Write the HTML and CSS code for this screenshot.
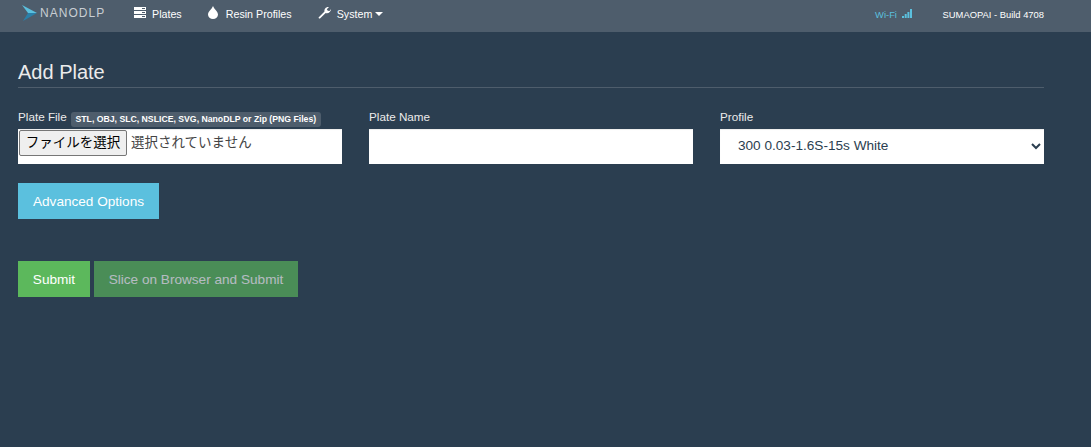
FILE: index.html
```html
<!DOCTYPE html>
<html lang="ja">
<head>
<meta charset="utf-8">
<title>NanoDLP</title>
<link rel="stylesheet" href="styles.css">
</head>
<body>
<nav class="navbar">
  <a class="brand">
    <svg class="brand-mark" width="15" height="16" viewBox="0 0 15 16"><path d="M0 0 L15 8 L6 8 Z" fill="#5bc0de"/><path d="M6 8 L15 8 L1 16 Z" fill="#2a7fa8"/></svg>
    <span class="brand-text">NANODLP</span>
  </a>
  <a class="nav-link">
    <svg class="icon icon-plates" width="12" height="11" viewBox="0 0 12 11"><path d="M0 0h12v3H0zM0 4h12v3H0zM0 8h12v3H0z" fill="#fff"/><path d="M8 1.500h3M8 5.500h3M8 9.500h3" stroke="#4e5d6c"/></svg>
    <span>Plates</span>
  </a>
  <a class="nav-link">
    <svg class="icon icon-drop" width="10" height="13" viewBox="0 0 10 13"><path d="M5 0C6 3 10 5.500 10 8.500A5 4.500 0 0 1 0 8.500C0 5.500 4 3 5 0Z" fill="#fff"/></svg>
    <span>Resin Profiles</span>
  </a>
  <a class="nav-link">
    <svg class="icon icon-wrench" width="13" height="13" viewBox="0 0 13 13"><path d="M1 12.500L0.500 11.500L6.500 5.500C6 3 8 0.500 11 1L8.800 3.200L9.800 4.700L11.500 5L13 3C13 6 10 8 7.700 7L2 12.500Z" fill="#fff"/></svg>
    <span>System</span>
    <span class="caret"></span>
  </a>
  <div class="nav-right">
    <span class="wifi">Wi-Fi
      <svg class="wifi-bars" width="10" height="9" viewBox="0 0 10 9"><path d="M0 7h2v2H0zM2.700 5h2v4h-2zM5.400 3h2v6h-2zM8 0h2v9H8z" fill="#5bc0de"/></svg>
    </span>
    <span class="build">SUMAOPAI - Build 4708</span>
  </div>
</nav>
<main class="page">
  <h1 class="title">Add Plate</h1>
  <form class="plate-form">
    <div class="fields">
      <div class="field">
        <label class="field-label">Plate File <span class="badge">STL, OBJ, SLC, NSLICE, SVG, NanoDLP or Zip (PNG Files)</span></label>
        <div class="file-input">
          <button type="button" class="file-button">ファイルを選択</button>
          <span class="file-name">選択されていません</span>
        </div>
      </div>
      <div class="field">
        <label class="field-label">Plate Name</label>
        <input class="text-input" type="text">
      </div>
      <div class="field">
        <label class="field-label">Profile</label>
        <select class="select-input"><option>300 0.03-1.6S-15s White</option></select>
      </div>
    </div>
    <button type="button" class="btn btn-info">Advanced Options</button>
    <div class="actions">
      <button type="button" class="btn btn-success">Submit</button>
      <button type="button" class="btn btn-success btn-disabled">Slice on Browser and Submit</button>
    </div>
  </form>
</main>
</body>
</html>
```
FILE: styles.css
```css
* { box-sizing: border-box; }
html, body { height: 100%; }
body {
  margin: 0;
  background: #2b3e50;
  color: #ebebeb;
  font-family: "Liberation Sans", Arial, sans-serif;
  font-size: 12px;
  overflow: hidden;
}
.navbar {
  display: flex;
  align-items: center;
  height: 32px;
  padding: 0 47px 0 22px;
  background: #4e5d6c;
  color: #fff;
  font-size: 10.7px;
}
.brand {
  display: flex;
  align-items: center;
  width: 112px;
  height: 20px;
  margin-top: -6px;
}
.brand-mark { margin-right: 3px; }
.brand-text {
  color: #c8ced3;
  font-size: 12px;
  letter-spacing: 1.05px;
}
.nav-link {
  display: flex;
  align-items: center;
  margin-right: 26px;
  margin-top: -4px;
  white-space: nowrap;
}
.icon { margin-top: -3px; }
.icon-plates { margin-right: 6px; }
.icon-drop { margin-right: 8px; }
.icon-wrench { margin-right: 6px; }
.caret {
  display: inline-block;
  width: 0;
  height: 0;
  margin-left: 3px;
  border-left: 4px solid transparent;
  border-right: 4px solid transparent;
  border-top: 4px solid #fff;
}
.nav-right {
  display: flex;
  align-items: center;
  margin-left: auto;
  margin-top: -4px;
  font-size: 9.4px;
}
.wifi { color: #5bc0de; margin-right: 31px; }
.wifi-bars { margin-left: 2px; }
.build { color: #fff; }
.page { padding: 29px 47px 0 18px; }
.title {
  margin: 0;
  padding-bottom: 4px;
  border-bottom: 1px solid #4e5d6c;
  color: #ebebeb;
  font-size: 20px;
  font-weight: 400;
  line-height: 22px;
  height: 27px;
}
.fields {
  display: grid;
  grid-template-columns: repeat(3, 324px);
  column-gap: 27px;
  margin-top: 21px;
}
.field { display: flex; flex-direction: column; }
.field-label {
  display: block;
  height: 20px;
  line-height: 16px;
  font-size: 11.7px;
  font-weight: 400;
  white-space: nowrap;
}
.badge {
  display: inline-block;
  margin-left: 1px;
  padding: 0 4.500px;
  background: #4e5d6c;
  border-radius: 3px;
  color: #fff;
  font-size: 8.7px;
  font-weight: 700;
  line-height: 15px;
  vertical-align: -1px;
}
.file-input {
  display: flex;
  align-items: flex-start;
  height: 35px;
  padding-top: 1px;
  background: #fff;
  box-shadow: inset 0 1px 1px rgba(0, 0, 0, 0.075);
  color: #333;
  font-family: "Noto Sans CJK JP", sans-serif;
}
.file-button {
  height: 26px;
  width: 108px;
  margin-left: 1px;
  padding: 0 0 2px;
  background: #efefef;
  border: 1px solid #767676;
  border-radius: 2px;
  color: #000;
  font-family: "Noto Sans CJK JP", sans-serif;
  font-size: 13.5px;
  line-height: 1;
}
.file-name {
  margin-left: 4px;
  font-size: 13.5px;
  line-height: 22px;
  color: #444;
}
.text-input, .select-input {
  display: block;
  width: 100%;
  height: 35px;
  border: 0;
  border-radius: 0;
  background: #fff;
  box-shadow: inset 0 1px 1px rgba(0, 0, 0, 0.075);
  color: #2b3e50;
  font-family: "Liberation Sans", Arial, sans-serif;
  font-size: 13.6px;
}
.select-input { padding: 0 8px 2px 14px; }
.btn {
  display: block;
  height: 36px;
  padding: 0;
  border: 0;
  border-radius: 0;
  color: #fff;
  font-family: "Liberation Sans", Arial, sans-serif;
  font-size: 13.6px;
  white-space: nowrap;
}
.btn-info { margin-top: 19px; width: 141px; background: #5bc0de; }
.actions { display: flex; gap: 4px; margin-top: 42px; }
.btn-success { background: #5cb85c; width: 72px; }
.btn-disabled { width: 204px; opacity: 0.65; }
```
